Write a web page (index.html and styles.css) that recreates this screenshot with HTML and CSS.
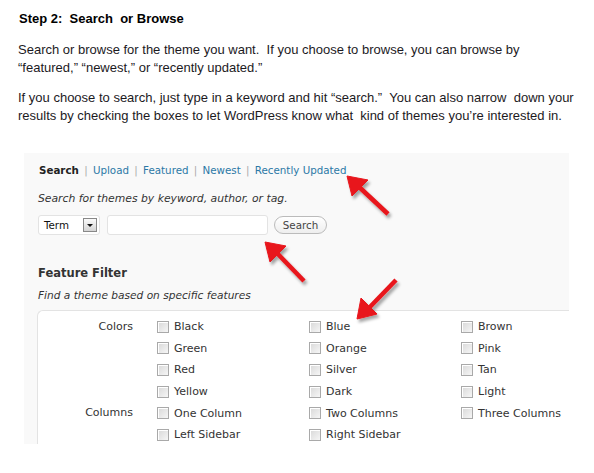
FILE: index.html
```html
<!DOCTYPE html>
<html lang="en">
<head>
    <meta charset="UTF-8">
    <meta name="viewport" content="width=device-width, initial-scale=1.0">
    <title>Step 2: Search or Browse</title>
    <link rel="stylesheet" href="styles.css">
</head>
<body>
    <div class="page">
        <h1>Step 2:&nbsp; Search&nbsp; or Browse</h1>

        <p class="first">Search or browse for the theme you want.&nbsp; If you choose to browse, you can browse by “featured,” “newest,” or “recently updated.”</p>
        <p>If you choose to search, just type in a keyword and hit “search.”&nbsp; You can also narrow&nbsp; down your results by checking the boxes to let WordPress know what&nbsp; kind of themes you’re interested in.</p>

        <!-- screenshot of the theme installer -->
        <div class="shot">
            <div class="tabs">
                <b>Search</b> <span class="sep">|</span>
                <a href="#">Upload</a> <span class="sep">|</span>
                <a href="#">Featured</a> <span class="sep">|</span>
                <a href="#">Newest</a> <span class="sep">|</span>
                <a href="#">Recently Updated</a>
            </div>

            <p class="hint">Search for themes by keyword, author, or tag.</p>

            <div class="search-row">
                <div class="select">
                    <span>Term</span>
                    <span class="drop"></span>
                </div>
                <div class="field"></div>
                <button>Search</button>
            </div>

            <h3>Feature Filter</h3>
            <p class="hint small">Find a theme based on specific features</p>

            <div class="filter">
                <div class="label">Colors</div>
                <label><input type="checkbox"> Black</label>
                <label><input type="checkbox"> Blue</label>
                <label><input type="checkbox"> Brown</label>
                <div></div>
                <label><input type="checkbox"> Green</label>
                <label><input type="checkbox"> Orange</label>
                <label><input type="checkbox"> Pink</label>
                <div></div>
                <label><input type="checkbox"> Red</label>
                <label><input type="checkbox"> Silver</label>
                <label><input type="checkbox"> Tan</label>
                <div></div>
                <label><input type="checkbox"> Yellow</label>
                <label><input type="checkbox"> Dark</label>
                <label><input type="checkbox"> Light</label>

                <div class="label">Columns</div>
                <label><input type="checkbox"> One Column</label>
                <label><input type="checkbox"> Two Columns</label>
                <label><input type="checkbox"> Three Columns</label>
                <div></div>
                <label><input type="checkbox"> Left Sidebar</label>
                <label><input type="checkbox"> Right Sidebar</label>
                <div></div>
            </div>
        </div>
    </div>

    <!-- red arrows drawn over the screenshot -->
    <svg class="arrows" width="594" height="473" viewBox="0 0 594 473">
        <defs>
            <filter id="shadow" x="-20%" y="-20%" width="140%" height="140%">
                <feDropShadow dx="2" dy="3" stdDeviation="1.5" flood-color="#000" flood-opacity="0.35"/>
            </filter>
        </defs>
        <g fill="#e8141b" stroke="#e8141b" filter="url(#shadow)">
            <line x1="388" y1="214" x2="357" y2="185" stroke-width="4.5"/>
            <polygon points="347,176 368,180 352,196" stroke-width="1" stroke-linejoin="round"/>

            <line x1="304" y1="281" x2="275" y2="251" stroke-width="4.5"/>
            <polygon points="265,242 286,246 270,262" stroke-width="1" stroke-linejoin="round"/>

            <line x1="396" y1="280" x2="367" y2="310" stroke-width="4.5"/>
            <polygon points="357,319 361,298 377,314" stroke-width="1" stroke-linejoin="round"/>
        </g>
    </svg>
</body>
</html>
```

FILE: styles.css
```css
*{
    margin: 0;
    padding: 0;
    box-sizing: border-box;
}

body{
    background: #fff;
    font-family: "Liberation Sans", Arial, sans-serif;
    color: #1c1a1e;
    position: relative;
}

.page{
    padding: 11px 0 0 18px;
}

h1{
    font-size: 13px;
    line-height: 16px;
    font-weight: bold;
    color: #000;
    margin-left: 1px;
}

.page > p{
    font-size: 13px;
    line-height: 18px;
    width: 562px;
    margin-top: 12px;
}

.page > p.first{
    margin-top: 14px;
}

/* theme installer screenshot */
.shot{
    margin: 28px 0 0 6px;
    width: 545px;
    height: 291px;
    overflow: hidden;
    background: #f9f9f9;
    padding: 10px 0 0 14px;
    font-family: "DejaVu Sans", Verdana, sans-serif;
    font-size: 10.3px;
    color: #333;
}

.tabs{
    line-height: 14px;
    padding-left: 1px;
}

.tabs b{
    color: #222;
}

.tabs a{
    color: #2b78a6;
    text-decoration: none;
}

.tabs .sep{
    color: #aaa;
    margin: 0 2px;
}

.hint{
    font-style: italic;
    font-size: 10.8px;
    line-height: 14px;
    margin-top: 15px;
    color: #333;
}

.hint.small{
    font-size: 10.6px;
}

.search-row{
    display: flex;
    align-items: center;
    margin-top: 9px;
    height: 20px;
}

.select{
    width: 62px;
    height: 20px;
    background: #fff;
    border: 1px solid #e3e3e3;
    border-radius: 3px;
    display: flex;
    align-items: center;
    justify-content: space-between;
    padding: 0 2px 0 5px;
    color: #111;
}

.drop{
    width: 14px;
    height: 14px;
    border: 1px solid #888;
    background: linear-gradient(#fafafa, #d4d4d4);
    position: relative;
}

.drop::after{
    content: "";
    position: absolute;
    left: 3px;
    top: 5px;
    border-left: 3px solid transparent;
    border-right: 3px solid transparent;
    border-top: 3px solid #111;
}

.field{
    width: 161px;
    height: 20px;
    margin-left: 7px;
    background: #fff;
    border: 1px solid #e3e3e3;
    border-radius: 3px;
}

button{
    margin-left: 6px;
    width: 53px;
    height: 18px;
    border: 1px solid #bbb;
    border-radius: 9px;
    background: linear-gradient(#fff, #eee);
    font-family: "DejaVu Sans", Verdana, sans-serif;
    font-size: 10.3px;
    color: #444;
}

h3{
    font-size: 11.5px;
    line-height: 16px;
    font-weight: bold;
    color: #333;
    margin-top: 30px;
}

h3 + .hint{
    margin-top: 7px;
}

.filter{
    margin: 8px 0 0 -1px;
    width: 560px;
    height: 200px;
    background: #fff;
    border: 1px solid #e3e3e3;
    border-right: none;
    border-radius: 6px 0 0 0;
    padding-top: 5px;
    display: grid;
    grid-template-columns: 119px 152px 152px 152px;
    grid-auto-rows: 21.6px;
    font-size: 11px;
    color: #333;
}

.filter .label{
    text-align: right;
    padding-right: 24px;
    line-height: 21.6px;
}

.filter label{
    display: flex;
    align-items: center;
    gap: 5px;
    white-space: nowrap;
}

.filter input{
    appearance: none;
    width: 12px;
    height: 12px;
    border: 1px solid #a9a9a9;
    background: linear-gradient(135deg, #d8d8d8, #f6f6f6);
    box-shadow: inset 1px 1px 0 #fff;
}

/* overlay */
.arrows{
    position: absolute;
    top: 0;
    left: 0;
    pointer-events: none;
}
```
